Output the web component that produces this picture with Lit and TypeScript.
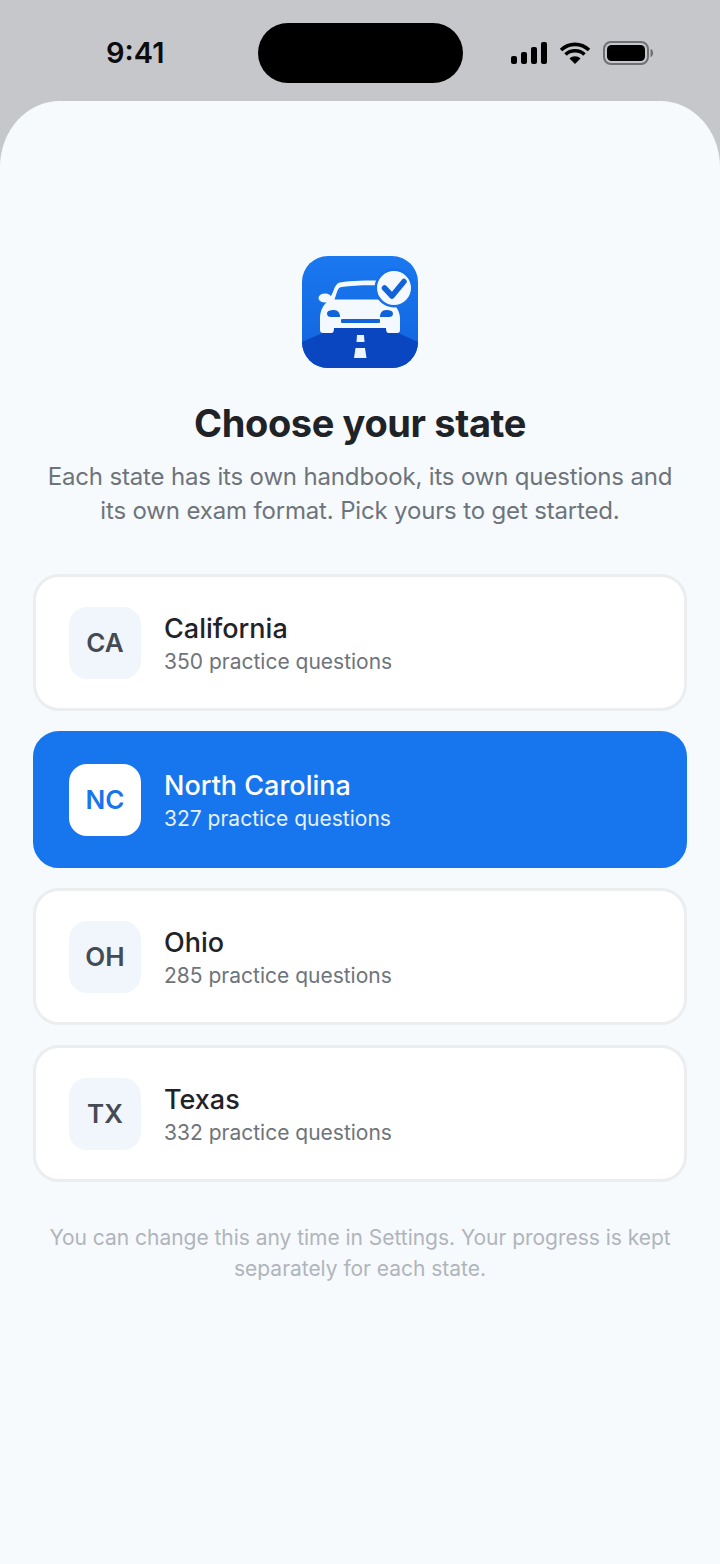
import { LitElement, html, css, svg } from 'lit';
import { customElement, property } from 'lit/decorators.js';
import { classMap } from 'lit/directives/class-map.js';

interface StateOption {
  code: string;
  name: string;
  questions: number;
}

const STATES: StateOption[] = [
  { code: 'CA', name: 'California', questions: 350 },
  { code: 'NC', name: 'North Carolina', questions: 327 },
  { code: 'OH', name: 'Ohio', questions: 285 },
  { code: 'TX', name: 'Texas', questions: 332 },
];

const appIcon = svg`
  <svg class="logo" viewBox="0 0 116 112" aria-hidden="true">
    <defs>
      <linearGradient id="sky" x1="0" y1="0" x2="0" y2="1">
        <stop offset="0" stop-color="#1a78f0"/>
        <stop offset="1" stop-color="#1163dc"/>
      </linearGradient>
    </defs>
    <rect width="116" height="112" rx="26" fill="url(#sky)"/>
    <path d="M0 86 L32 72 H85 L116 86 A26 26 0 0 1 90 112 H26 A26 26 0 0 1 0 86 Z" fill="#0a46c0"/>
    <path d="M55 79 H62 L62.500 86 H54.500 Z M53.500 92 H63 L64.500 102 H52 Z" fill="#eef4fe"/>
    <ellipse cx="23" cy="42" rx="6.500" ry="4.500" fill="#f4f8ff"/>
    <path fill="#f4f8ff" fill-rule="evenodd" d="M38 26.500 C50 24.500 65 24.500 80 24.500 L87 44 C93 48 98 55 98 62 V74 C98 76 97 77 95 77 H87 C85 77 84 76 84 72 H32 C32 76 31 77 29 77 H21 C19 77 18 76 18 74 V62 C18 54 22 48 27 44 L31 36 C33 30 35 27 38 26.500 Z M39.500 31 C37 31.500 36 33 35 36 L32.500 43.500 H83.500 L77 29.500 C65 29 51 29.500 39.500 31 Z"/>
    <path d="M25 57.500 C25 55 28 54 32 54 C36 54 38 57 38 61 H29 C26.500 61 25 60 25 57.500 Z M91 57.500 C91 55 88 54 84 54 C80 54 78 57 78 61 H87 C89.500 61 91 60 91 57.500 Z" fill="#1163dc"/>
    <rect x="39" y="63" width="39" height="4" rx="1" fill="#1163dc"/>
    <circle cx="92" cy="32" r="19.500" fill="#1570ea"/>
    <circle cx="92" cy="32" r="17" fill="#f4f8ff"/>
    <path d="M82.500 32 L90 40 L102 25.500" fill="none" stroke="#1163dc" stroke-width="5.500" stroke-linecap="round" stroke-linejoin="round"/>
  </svg>
`;

const statusIcons = svg`
  <svg class="signal" viewBox="0 0 36 22" aria-hidden="true">
    <rect x="0" y="14" width="6" height="8" rx="2"/>
    <rect x="10" y="10" width="6" height="12" rx="2"/>
    <rect x="20" y="5" width="6" height="17" rx="2"/>
    <rect x="30" y="0" width="6" height="22" rx="2"/>
  </svg>
  <svg class="wifi" viewBox="0 0 32 22" aria-hidden="true">
    <path d="M16 22 L10.500 16.500 C13.500 13.500 18.500 13.500 21.500 16.500 Z" />
    <path d="M6.500 12.500 C11.500 7.500 20.500 7.500 25.500 12.500" fill="none" stroke="#000" stroke-width="3.600"/>
    <path d="M2 8 C10 0.500 22 0.500 30 8" fill="none" stroke="#000" stroke-width="3.600"/>
  </svg>
  <svg class="battery" viewBox="0 0 50 24" aria-hidden="true">
    <rect x="1" y="1" width="44" height="22" rx="7" fill="none" stroke="#6f7073" stroke-width="2"/>
    <rect x="4" y="4" width="38" height="16" rx="4.500"/>
    <path d="M47.500 8 C49.500 8.500 50 10 50 12 C50 14 49.500 15.500 47.500 16 Z" fill="#6f7073"/>
  </svg>
`;

@customElement('app-root')
export class AppRoot extends LitElement {
  @property({ type: String }) selected: string = 'NC';

  static styles = css`
    :host {
      background-color: #c6c7ca;
      color: #1f2328;
      display: flex;
      flex-direction: column;
      font-family: Inter, "Liberation Sans", sans-serif;
      min-height: 100vh;
    }

    .status {
      box-sizing: border-box;
      display: grid;
      grid-template-columns: 258px 205px 1fr;
      height: 101px;
      padding-top: 23px;
    }

    .time {
      color: #0c0c0d;
      font-size: 29px;
      font-weight: 600;
      line-height: 60px;
      padding-left: 106px;
    }

    .island {
      background-color: #000000;
      border-radius: 30px;
      height: 60px;
    }

    .indicators {
      align-items: center;
      display: flex;
      height: 60px;
      padding-left: 48px;
    }

    .signal {
      height: 22px;
      width: 36px;
    }

    .wifi {
      height: 22px;
      margin-left: 12px;
      width: 32px;
    }

    .battery {
      height: 24px;
      margin-left: 12px;
      width: 50px;
    }

    .sheet {
      align-items: center;
      background-color: #f6fafd;
      border-radius: 60px 60px 0 0 / 66px 66px 0 0;
      display: flex;
      flex: 1;
      flex-direction: column;
      padding: 155px 33px 0;
    }

    .logo {
      display: block;
      height: 112px;
      width: 116px;
    }

    h1 {
      font-size: 38px;
      font-weight: 700;
      letter-spacing: -0.38px;
      line-height: 44px;
      margin: 33px 0 0;
    }

    .lead {
      color: #6e747b;
      font-size: 24px;
      letter-spacing: -0.16px;
      line-height: 34px;
      margin: 15px 0 0;
      text-align: center;
    }

    .states {
      align-self: stretch;
      display: flex;
      flex-direction: column;
      gap: 20px;
      margin-top: 46px;
    }

    .state {
      align-items: center;
      background-color: #ffffff;
      border: 3px solid #ebedef;
      border-radius: 26px;
      box-sizing: border-box;
      display: flex;
      gap: 23px;
      height: 137px;
      padding-left: 33px;
    }

    .state.selected {
      background-color: #1775ee;
      border-color: #1775ee;
      color: #ffffff;
    }

    .badge {
      align-items: center;
      background-color: #f1f6fd;
      border-radius: 18px;
      color: #454b54;
      display: flex;
      flex: none;
      font-size: 26px;
      font-weight: 600;
      height: 72px;
      justify-content: center;
      width: 72px;
    }

    .selected .badge {
      background-color: #ffffff;
      color: #1775ee;
    }

    .details {
      padding-top: 2px;
    }

    .name {
      font-size: 27px;
      font-weight: 550;
      line-height: 34px;
    }

    .count {
      color: #6e747b;
      font-size: 21px;
      line-height: 26px;
      margin-top: 3px;
    }

    .selected .count {
      color: #e6f0fe;
    }

    .note {
      color: #b0b5bb;
      font-size: 21px;
      letter-spacing: -0.03px;
      line-height: 31px;
      margin: 40px 0 0;
      text-align: center;
    }
  `;

  renderState(state: StateOption) {
    const classes = { state: true, selected: state.code === this.selected };

    return html`
      <div class=${classMap(classes)}>
        <div class="badge">${state.code}</div>
        <div class="details">
          <div class="name">${state.name}</div>
          <div class="count">${state.questions} practice questions</div>
        </div>
      </div>
    `;
  }

  render() {
    return html`
      <header class="status">
        <div class="time">9:41</div>
        <div class="island"></div>
        <div class="indicators">${statusIcons}</div>
      </header>

      <main class="sheet">
        ${appIcon}
        <h1>Choose your state</h1>
        <p class="lead">
          Each state has its own handbook, its own questions and<br />
          its own exam format. Pick yours to get started.
        </p>

        <section class="states">
          ${STATES.map(state => this.renderState(state))}
        </section>

        <p class="note">
          You can change this any time in Settings. Your progress is kept<br />
          separately for each state.
        </p>
      </main>
    `;
  }
}
